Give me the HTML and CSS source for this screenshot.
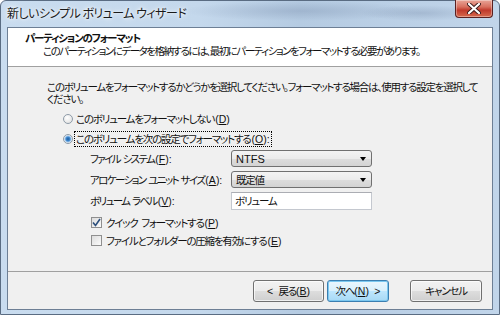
FILE: index.html
```html
<!DOCTYPE html>
<html lang="ja">
<head>
<meta charset="utf-8">
<link rel="stylesheet" href="styles.css">
</head>
<body>
<div class="window">
  <div class="titlebar">
    <div class="title">新しいシンプル ボリューム ウィザード</div>
    <div class="close">
      <svg width="14" height="11" viewBox="0 0 14 11"><path d="M2 1 L12 10 M12 1 L2 10" stroke="#3a1a1a" stroke-width="4" stroke-linecap="round"/><path d="M2 1 L12 10 M12 1 L2 10" stroke="#ffffff" stroke-width="2.2" stroke-linecap="round"/></svg>
    </div>
  </div>
  <div class="client">
    <div class="header">
      <div class="h-title">パーティションのフォーマット</div>
      <div class="h-sub">このパーティションにデータを格納するには、最初にパーティションをフォーマットする必要があります。</div>
    </div>
    <div class="body">
      <div class="intro">このボリュームをフォーマットするかどうかを選択してください。フォーマットする場合は、使用する設定を選択して<br>ください。</div>
      <div class="radio-row r1">
        <span class="radio"></span>
        <span class="rtext">このボリュームをフォーマットしない<span class="k">(<u>D</u>)</span></span>
      </div>
      <div class="radio-row">
        <span class="radio on"></span>
        <span class="rtext focus">このボリュームを次の設定でフォーマットする<span class="k">(<u>O</u>):</span></span>
      </div>
      <div class="field f1">
        <span class="label">ファイル システム<span class="k">(<u>F</u>):</span></span>
        <span class="select"><span class="latin">NTFS</span><span class="arrow"></span></span>
      </div>
      <div class="field">
        <span class="label">アロケーション ユニット サイズ<span class="k">(<u>A</u>):</span></span>
        <span class="select">既定値<span class="arrow"></span></span>
      </div>
      <div class="field">
        <span class="label">ボリューム ラベル<span class="k">(<u>V</u>):</span></span>
        <span class="input">ボリューム</span>
      </div>
      <div class="check-row c1">
        <span class="check on"><svg width="9" height="9" viewBox="0 0 9 9"><path d="M1 4.5 L3.5 7.5 L8 1" fill="none" stroke="#2c4f7c" stroke-width="1.6"/></svg></span>
        <span>クイック フォーマットする<span class="k">(<u>P</u>)</span></span>
      </div>
      <div class="check-row">
        <span class="check"></span>
        <span>ファイルとフォルダーの圧縮を有効にする<span class="k">(<u>E</u>)</span></span>
      </div>
    </div>
    <div class="footer">
      <span class="btn back"><span class="k">&lt; </span>戻る<span class="k">(<u>B</u>)</span></span>
      <span class="btn next">次へ<span class="k">(<u>N</u>) &gt;</span></span>
      <span class="btn cancel">キャンセル</span>
    </div>
  </div>
</div>
</body>
</html>
```
FILE: styles.css
```css
* { box-sizing: border-box; }
html, body { margin: 0; padding: 0; }
body {
  width: 500px;
  height: 315px;
  overflow: hidden;
  font-family: "Noto Sans CJK JP", "Noto Sans", sans-serif;
  font-feature-settings: "palt";
  font-size: 10.5px;
  color: #111;
}
u { text-decoration: underline; text-underline-offset: 1px; }
.k {
  font-family: "Liberation Sans", "Noto Sans", sans-serif;
  letter-spacing: 0;
  font-size: 10.5px;
  padding-left: 1px;
}
.window {
  width: 500px;
  height: 315px;
  display: flex;
  flex-direction: column;
  background:
    radial-gradient(ellipse 120px 10px at 300px 10px, rgba(120,140,170,0.35), transparent),
    radial-gradient(ellipse 60px 8px at 420px 12px, rgba(120,140,170,0.35), transparent),
    linear-gradient(90deg, #c9dcef 0%, #c4d8ec 40%, #b5cbe2 60%, #c1d5ea 100%);
  border: 1px solid #5a6c82;
  border-radius: 6px 6px 0 0;
}
.titlebar {
  height: 26px;
  display: flex;
  align-items: flex-start;
}
.title {
  padding: 4px 0 0 6px;
  font-size: 12px;
  letter-spacing: -0.55px;
  line-height: 16px;
  color: #1a1a1a;
  text-shadow: 0 0 6px #fff, 0 0 3px #fff;
}
.close {
  margin-left: auto;
  margin-right: 6px;
  width: 38px;
  height: 18px;
  margin-top: -1px;
  border: 1px solid #5a2020;
  border-top: none;
  border-radius: 0 0 4px 4px;
  background: linear-gradient(#e8a598 0%, #d8705f 40%, #c0392b 60%, #d66a4e 100%);
  box-shadow: inset 0 0 0 1px rgba(255,255,255,0.35);
  display: flex;
  align-items: center;
  justify-content: center;
}
.client {
  flex: 1;
  margin: 0 6px 4px 6px;
  border: 1px solid #6d7f95;
  background: #f0f0f0;
  display: flex;
  flex-direction: column;
  letter-spacing: -1.2px;
  word-spacing: 2.5px;
}
.header {
  height: 39px;
  background: #fff;
  border-bottom: 1px solid #a0a0a0;
  padding: 4px 0 0 17px;
  line-height: 12.5px;
}
.h-title { font-weight: bold; }
.h-sub { padding-left: 18px; white-space: nowrap; letter-spacing: -1.5px; }
.body {
  flex: 1;
  padding: 14px 0 0 39px;
}
.intro { line-height: 12px; white-space: nowrap; letter-spacing: -1.25px; }
.radio-row {
  display: flex;
  align-items: center;
  height: 20px;
  padding-left: 16px;
}
.radio-row.r1 { margin-top: 4px; }
.radio {
  width: 10px;
  height: 10px;
  border-radius: 50%;
  border: 1px solid #8e9ba8;
  background: radial-gradient(circle at 40% 35%, #fff, #dcdcdc);
  margin-right: 2px;
}
.radio.on {
  background: radial-gradient(circle, #1d5b9c 0, #3d87cf 2px, #9cc5ec 3px, #f4f4f4 4px);
}
.rtext { padding: 0 1px; line-height: 13px; white-space: nowrap; }
.rtext.focus { outline: 1px dotted #000; outline-offset: 0; }
.field {
  display: flex;
  align-items: center;
  height: 21px;
  padding-left: 43px;
}
.field.f1 { margin-top: -1px; }
.label { width: 141px; white-space: nowrap; letter-spacing: -1.6px; word-spacing: 1.8px; }
.select {
  width: 141px;
  height: 17px;
  border: 1px solid #707070;
  border-radius: 3px;
  background: linear-gradient(#f3f3f3 0%, #ebebeb 50%, #dddddd 51%, #d3d3d3 100%);
  display: flex;
  align-items: center;
  padding-left: 4px;
}
.latin { letter-spacing: 0; font-family: "Liberation Sans", "Noto Sans", sans-serif; font-size: 11px; }
.arrow {
  margin-left: auto;
  margin-right: 5px;
  width: 0;
  height: 0;
  border-left: 3.5px solid transparent;
  border-right: 3.5px solid transparent;
  border-top: 4px solid #000;
}
.input {
  width: 141px;
  height: 18px;
  border: 1px solid #c4c8cf;
  border-top-color: #abadb3;
  background: #fff;
  display: flex;
  align-items: center;
  padding-left: 3px;
}
.check-row {
  display: flex;
  align-items: center;
  height: 18px;
  padding-left: 44px;
  white-space: nowrap;
}
.check-row.c1 { margin-top: 2px; }
.check {
  width: 11px;
  height: 11px;
  border: 1px solid #8f8f8f;
  background: linear-gradient(135deg, #dcdcdc, #fbfbfb);
  margin-right: 4px;
  display: flex;
  align-items: center;
  justify-content: center;
}
.footer {
  height: 38px;
  border-top: 1px solid #a0a0a0;
  display: flex;
  align-items: center;
  padding: 0 10px 0 245px;
}
.btn {
  height: 22px;
  border: 1px solid #707070;
  border-radius: 3px;
  background: linear-gradient(#f2f2f2 0%, #ebebeb 50%, #dddddd 51%, #cfcfcf 100%);
  box-shadow: inset 0 0 0 1px rgba(255,255,255,0.7);
  display: flex;
  align-items: center;
  justify-content: center;
  line-height: 12px;
  white-space: pre;
}
.btn .k { padding-left: 0; }
.back { width: 71px; }
.next {
  width: 62px;
  margin-left: 3px;
  border-color: #3c7fb1;
  background: linear-gradient(#eaf6fd 0%, #d9f0fc 50%, #bee6fd 51%, #a7d9f5 100%);
  box-shadow: inset 0 0 0 1px #7cc8f0;
}
.cancel { width: 72px; margin-left: auto; }
```
